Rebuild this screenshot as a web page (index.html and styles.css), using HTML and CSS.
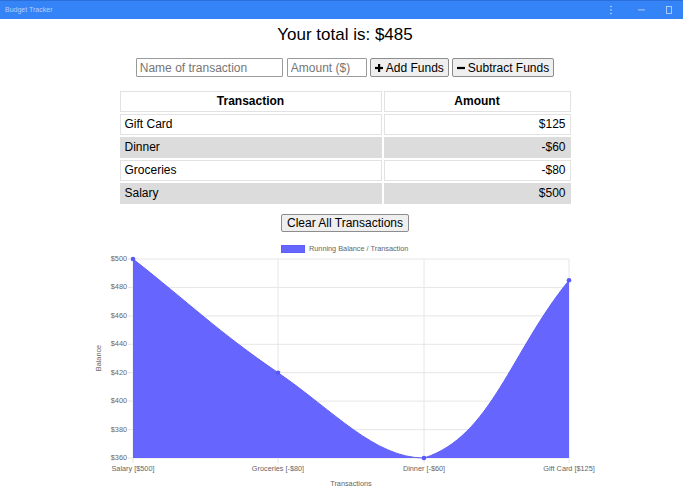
FILE: index.html
```html
<!DOCTYPE html>
<html lang="en">
<head>
<meta charset="utf-8">
<title>Budget Tracker</title>
<link rel="stylesheet" href="styles.css">
</head>
<body>
<header class="titlebar">
  <span class="app-title">Budget Tracker</span>
  <div class="win-controls">
    <svg width="4" height="10" viewBox="0 0 4 10" class="ctl"><circle cx="2" cy="1.5" r="0.8"/><circle cx="2" cy="5" r="0.8"/><circle cx="2" cy="8.5" r="0.8"/></svg>
    <svg width="9" height="10" viewBox="0 0 9 10" class="ctl"><rect x="1" y="4.5" width="7" height="0.8"/></svg>
    <svg width="8" height="10" viewBox="0 0 8 10" class="ctl ctl-square"><rect x="1.5" y="1.5" width="5" height="7" fill="none" stroke-width="0.8"/></svg>
  </div>
</header>
<main class="page">
  <h1 class="total">Your total is: $<span class="total-amount">485</span></h1>
  <form class="entry" onsubmit="return false">
    <input class="field field-name" type="text" placeholder="Name of transaction">
    <input class="field field-amount" type="number" placeholder="Amount ($)">
    <button class="btn" type="button">
      <svg class="btn-icon" width="8" height="8" viewBox="0 0 8 8"><rect x="3" y="0" width="2.2" height="8"/><rect x="0" y="2.9" width="8" height="2.2"/></svg>
      Add Funds
    </button>
    <button class="btn" type="button">
      <svg class="btn-icon" width="8" height="8" viewBox="0 0 8 8"><rect x="0" y="2.9" width="8" height="2.2"/></svg>
      Subtract Funds
    </button>
  </form>
  <table class="ledger">
    <colgroup><col class="col-name"><col class="col-amount"></colgroup>
    <thead>
      <tr><th>Transaction</th><th>Amount</th></tr>
    </thead>
    <tbody>
      <tr><td>Gift Card</td><td class="num">$125</td></tr>
      <tr class="alt"><td>Dinner</td><td class="num">-$60</td></tr>
      <tr><td>Groceries</td><td class="num">-$80</td></tr>
      <tr class="alt"><td>Salary</td><td class="num">$500</td></tr>
    </tbody>
  </table>
  <button class="btn btn-clear" type="button">Clear All Transactions</button>
</main>
<svg class="chart" width="683" height="263" viewBox="0 232 683 263">
  <g class="grid">
    <line x1="128" y1="259" x2="569" y2="259"/>
    <line x1="128" y1="287.4" x2="569" y2="287.4"/>
    <line x1="128" y1="315.9" x2="569" y2="315.9"/>
    <line x1="128" y1="344.3" x2="569" y2="344.3"/>
    <line x1="128" y1="372.7" x2="569" y2="372.7"/>
    <line x1="128" y1="401.1" x2="569" y2="401.1"/>
    <line x1="128" y1="429.6" x2="569" y2="429.6"/>
    <line x1="128" y1="458" x2="569" y2="458"/>
    <line x1="133" y1="259" x2="133" y2="463"/>
    <line x1="278" y1="259" x2="278" y2="463"/>
    <line x1="424" y1="259" x2="424" y2="463"/>
    <line x1="569" y1="259" x2="569" y2="463"/>
  </g>
  <path class="area" d="M133,259 C191,304.5 217.3,331.2 278,372.7 C333.7,410.8 374.6,458 424,458 C491,436.7 511,351.4 569,280.3 L569,458 L133,458 Z"/>
  <path class="line" d="M133,259 C191,304.5 217.3,331.2 278,372.7 C333.7,410.8 374.6,458 424,458 C491,436.7 511,351.4 569,280.3"/>
  <g class="dots">
    <circle cx="133" cy="259" r="2.3"/>
    <circle cx="278" cy="372.7" r="2.3"/>
    <circle cx="424" cy="458" r="2.3"/>
    <circle cx="569" cy="280.3" r="2.3"/>
  </g>
  <g class="legend">
    <rect x="281.5" y="245.5" width="23" height="7"/>
    <text x="309" y="249">Running Balance / Transaction</text>
  </g>
  <g class="ylabels">
    <text x="127" y="259">$500</text>
    <text x="127" y="287.4">$480</text>
    <text x="127" y="315.9">$460</text>
    <text x="127" y="344.3">$440</text>
    <text x="127" y="372.7">$420</text>
    <text x="127" y="401.1">$400</text>
    <text x="127" y="429.6">$380</text>
    <text x="127" y="458">$360</text>
  </g>
  <g class="xlabels">
    <text x="133" y="469">Salary [$500]</text>
    <text x="278" y="469">Groceries [-$80]</text>
    <text x="424" y="469">Dinner [-$60]</text>
    <text x="569" y="469">Gift Card [$125]</text>
  </g>
  <text class="axis-title" x="351" y="484">Transactions</text>
  <text class="axis-title" x="99" y="358" transform="rotate(-90 99 358)">Balance</text>
</svg>
</body>
</html>
```
FILE: styles.css
```css
* {
  box-sizing: border-box;
}

html, body {
  margin: 0;
  padding: 0;
  background: #ffffff;
  font-family: "Liberation Sans", Arial, sans-serif;
  color: #000000;
  overflow: hidden;
}

.titlebar {
  height: 19px;
  background: #3584f7;
  border-top: 1px solid #2b70da;
  display: flex;
  align-items: center;
  justify-content: space-between;
  padding: 0 10px 0 5px;
}

.app-title {
  font-size: 7px;
  color: #b4d0fc;
  line-height: 10px;
}

.win-controls {
  display: flex;
  align-items: center;
  gap: 0;
}

.ctl {
  fill: #c9dcfd;
  stroke: #c9dcfd;
  stroke-width: 0;
  display: block;
}

.ctl:nth-child(1) {
  margin-right: 24px;
}

.ctl:nth-child(2) {
  margin-right: 19px;
}

.ctl-square rect {
  stroke-width: 0.8;
}

.page {
  padding-left: 7px;
  display: flex;
  flex-direction: column;
  align-items: center;
}

.total {
  margin: 6px 0 0;
  font-size: 17px;
  line-height: 20px;
  font-weight: normal;
}

.entry {
  margin-top: 13px;
  display: flex;
  align-items: center;
  gap: 3px;
}

.field {
  height: 19px;
  border: 1px solid #9a9a9a;
  border-radius: 1px;
  padding: 0 3px;
  font-family: "Liberation Sans", Arial, sans-serif;
  font-size: 12px;
  color: #000;
  background: #fff;
  outline: none;
}

.field::placeholder {
  color: #767676;
}

.field-name {
  width: 147px;
  margin-right: 1px;
}

.field-amount {
  width: 80px;
  -moz-appearance: textfield;
}

.field-amount::-webkit-inner-spin-button,
.field-amount::-webkit-outer-spin-button {
  -webkit-appearance: none;
  margin: 0;
}

.btn {
  height: 19px;
  display: inline-flex;
  align-items: center;
  gap: 3px;
  padding: 0 4px;
  border: 1px solid #8d8d8d;
  border-radius: 2px;
  background: #efefef;
  font-family: "Liberation Sans", Arial, sans-serif;
  font-size: 12px;
  color: #000;
  line-height: 14px;
}

.btn-icon {
  fill: #000;
  display: block;
}

.ledger {
  margin-top: 12px;
  table-layout: fixed;
  width: 455px;
  border-collapse: separate;
  border-spacing: 2px;
  font-size: 12px;
}

.col-name {
  width: 262px;
}

.col-amount {
  width: 187px;
}

.ledger th,
.ledger td {
  border: 1px solid #e2e2e2;
  padding: 3px 4px;
  line-height: 13px;
  height: 21px;
  text-align: left;
}

.ledger th {
  text-align: center;
  font-weight: bold;
  background: #fff;
}

.ledger td.num {
  text-align: right;
}

.ledger tr.alt td {
  background: #dcdcdc;
  border-color: #dcdcdc;
}

.btn-clear {
  margin-top: 8px;
  height: 18px;
  padding: 0 5px;
}

.chart {
  display: block;
  font-family: "Liberation Sans", Arial, sans-serif;
}

.grid line {
  stroke: #e6e6e6;
  stroke-width: 1;
}

.area {
  fill: #6666ff;
}

.line {
  fill: none;
  stroke: #5e5ef8;
  stroke-width: 1;
}

.dots circle {
  fill: #5959fa;
}

.legend rect {
  fill: #6666ff;
  stroke: #5e5ef8;
  stroke-width: 1;
}

.legend text,
.ylabels text,
.xlabels text,
.axis-title {
  font-size: 7.3px;
  fill: #666666;
  dominant-baseline: middle;
}

.ylabels text {
  text-anchor: end;
}

.xlabels text,
.axis-title {
  text-anchor: middle;
}
```
